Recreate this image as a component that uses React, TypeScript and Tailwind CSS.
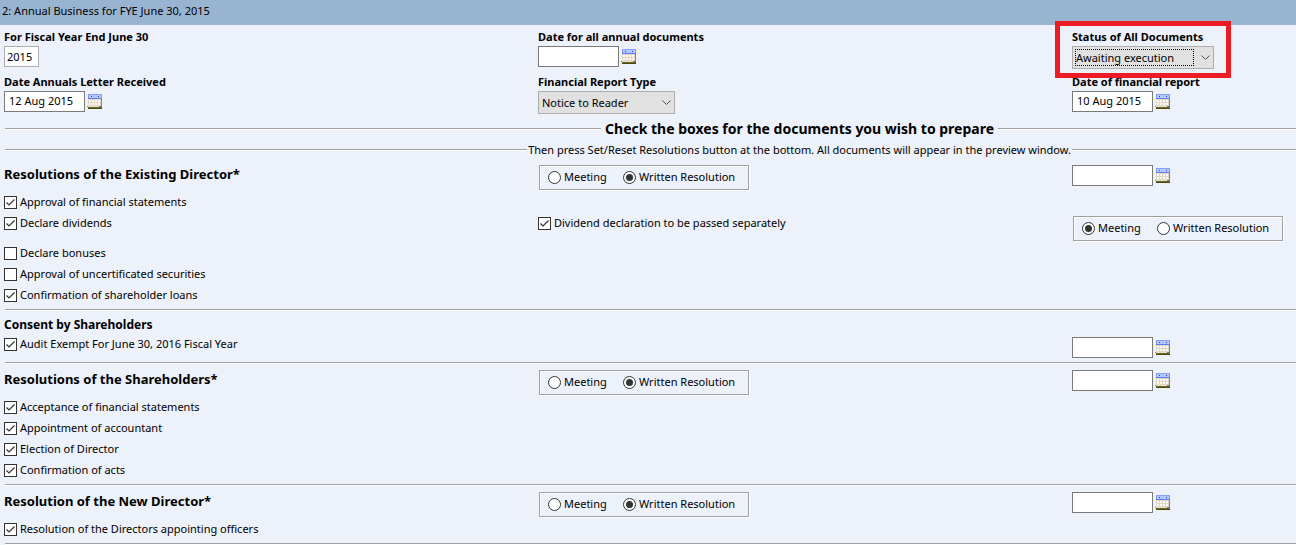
import React, { useState } from 'react';
import clsx from 'clsx';

const GRID = 'grid grid-cols-[534fr_534fr_224fr] pl-1';

function CalendarIcon() {
  return (
    <svg width="15" height="15" viewBox="0 0 15 15" shapeRendering="crispEdges" aria-hidden="true">
      <rect x="1" y="0" width="14" height="5" fill="#b4c8ff" />
      <rect x="1" y="0" width="14" height="1" fill="#86a0ff" />
      <rect x="1" y="1" width="1" height="4" fill="#7f98f5" />
      <rect x="14" y="1" width="1" height="4" fill="#7f98f5" />
      <rect x="1" y="4" width="14" height="1" fill="#5f7cf0" />
      <rect x="4" y="2" width="1" height="1" fill="#2c3fa8" />
      <rect x="11" y="2" width="1" height="1" fill="#2c3fa8" />
      <rect x="1" y="5" width="14" height="8" fill="#ded8c4" />
      {[2, 5, 8, 11].map(x =>
        [6, 9].map(y => <rect key={`${x}-${y}`} x={x} y={y} width="2" height="2" fill="#fff8f4" />)
      )}
      <rect x="2" y="12" width="11" height="1" fill="#e9dfd0" />
      <rect x="14" y="5" width="1" height="8" fill="#8a8660" />
      <rect x="0" y="12" width="1" height="1" fill="#8a8890" />
      <rect x="12" y="12" width="3" height="1" fill="#77747c" />
      <rect x="1" y="13" width="14" height="1" fill="#6b682c" />
      <rect x="1" y="14" width="14" height="1" fill="#4c4a08" />
    </svg>
  );
}

interface DateBoxProps {
  id: string;
  value?: string;
  label?: string;
}

function DateBox({ id, value = '', label }: DateBoxProps) {
  return (
    <div className="flex items-center gap-0.5">
      <input
        id={id}
        type="text"
        aria-label={label}
        defaultValue={value}
        className="h-[21px] w-[81px] border border-[#7a7a7a] bg-white px-1 pb-0.5"
      />
      <button type="button" aria-label="Pick a date">
        <CalendarIcon />
      </button>
    </div>
  );
}

interface FieldProps {
  id: string;
  label: string;
  highlighted?: boolean;
  children: React.ReactNode;
}

function Field({ id, label, highlighted, children }: FieldProps) {
  return (
    <div className="relative h-[45px]">
      <label htmlFor={id} className="block h-[18px] font-bold leading-[18px]">
        {label}
      </label>
      <div className="flex items-start">{children}</div>
      {highlighted && (
        <div className="pointer-events-none absolute -left-[17px] -top-[7px] z-10 h-[57px] w-[176px] border-[5px] border-[#ed1c24]" />
      )}
    </div>
  );
}

interface DropDownProps {
  id: string;
  options: string[];
  focused?: boolean;
  className: string;
}

function DropDown({ id, options, focused, className }: DropDownProps) {
  return (
    <div className={clsx('relative', className)}>
      <select
        id={id}
        className="h-[23px] w-full appearance-none border border-[#adadad] bg-[#e1e1e1] pl-[3px] pr-5 outline-none"
      >
        {options.map(option => (
          <option key={option}>{option}</option>
        ))}
      </select>
      {focused && (
        <span className="pointer-events-none absolute inset-y-[3px] left-[3px] right-5 border border-dotted border-black" />
      )}
      <svg
        className="pointer-events-none absolute right-1 top-2"
        width="9"
        height="7"
        viewBox="0 0 9 7"
        fill="none"
        stroke="#505050"
        aria-hidden="true"
      >
        <path d="M0.5 1.5 4.5 5.5 8.5 1.5" />
      </svg>
    </div>
  );
}

interface CheckItemProps {
  label: string;
  checked?: boolean;
}

function CheckItem({ label, checked = false }: CheckItemProps) {
  return (
    <label className="flex h-[21px] items-center gap-[3px]">
      <span className="relative h-[13px] w-[13px]">
        <input
          type="checkbox"
          defaultChecked={checked}
          className="peer block h-[13px] w-[13px] appearance-none border border-[#333333] bg-white"
        />
        <svg
          className="pointer-events-none absolute inset-0 hidden peer-checked:block"
          viewBox="0 0 13 13"
          fill="none"
          stroke="#333333"
          strokeWidth="1.2"
          aria-hidden="true"
        >
          <path d="M2.5 6.5 5 9 10.5 3.5" />
        </svg>
      </span>
      <span className="pb-0.5">{label}</span>
    </label>
  );
}

interface MethodChoiceProps {
  name: string;
  initial?: string;
}

function MethodChoice({ name, initial = 'Written Resolution' }: MethodChoiceProps) {
  const [method, setMethod] = useState(initial);

  return (
    <fieldset
      aria-label={name}
      className="ml-px flex h-[25px] w-[210px] items-center border border-[#a0a0a0] pl-2 shadow-[1px_1px_0_#fff,inset_1px_1px_0_#fff]"
    >
      {['Meeting', 'Written Resolution'].map(option => (
        <label key={option} className="flex items-center gap-[3px] first:w-[75px]">
          <input
            type="radio"
            name={name}
            checked={method === option}
            onChange={() => setMethod(option)}
            className="flex h-[13px] w-[13px] appearance-none items-center justify-center rounded-full border border-[#333333] bg-white before:hidden before:h-[7px] before:w-[7px] before:rounded-full before:bg-[#333333] checked:before:block"
          />
          <span className="pb-0.5">{option}</span>
        </label>
      ))}
    </fieldset>
  );
}

function Rule({ className }: { className?: string }) {
  return <div className={clsx('h-0.5 border-t border-[#a0a0a0] bg-white', className)} />;
}

function CenteredRule({ children, className }: { children: React.ReactNode; className: string }) {
  return (
    <div className={clsx('flex w-[123%] items-center pl-[5px]', className)}>
      <Rule className="flex-1" />
      {children}
      <Rule className="flex-1" />
    </div>
  );
}

interface SectionHeadProps {
  title: string;
  name: string;
}

function SectionHead({ title, name }: SectionHeadProps) {
  return (
    <div className={clsx(GRID, 'h-[27px] items-start')}>
      <h2 className="text-[13px] font-bold leading-[19px]">{title}</h2>
      <MethodChoice name={`${name}-method`} />
      <DateBox id={`${name}-date`} label={`${title} date`} />
    </div>
  );
}

export default function App() {
  return (
    <div className="min-h-screen overflow-x-hidden bg-[#ecf1fa] font-['Noto_Sans','Open_Sans',sans-serif] text-[11px] leading-4 text-black">
      <header className="flex h-[25px] items-center bg-[#99b4d1] pb-1 pl-0.5">
        <h1>2: Annual Business for FYE June 30, 2015</h1>
      </header>

      <form>
        <div className={clsx(GRID, 'pt-[3px]')}>
          <Field id="fiscal-year" label="For Fiscal Year End June 30">
            <input
              id="fiscal-year"
              type="text"
              defaultValue="2015"
              className="h-[21px] w-[35px] border border-[#abadb3] bg-white px-0.5"
            />
          </Field>
          <Field id="annual-date" label="Date for all annual documents">
            <DateBox id="annual-date" />
          </Field>
          <Field id="status" label="Status of All Documents" highlighted>
            <DropDown id="status" options={['Awaiting execution', 'Executed']} focused className="w-[142px]" />
          </Field>
          <Field id="letter-date" label="Date Annuals Letter Received">
            <DateBox id="letter-date" value="12 Aug 2015" />
          </Field>
          <Field id="report-type" label="Financial Report Type">
            <DropDown id="report-type" options={['Notice to Reader', 'Audited']} className="w-[137px]" />
          </Field>
          <Field id="report-date" label="Date of financial report">
            <DateBox id="report-date" value="10 Aug 2015" />
          </Field>
        </div>

        <CenteredRule className="h-[22px] gap-1">
          <h2 className="text-sm font-bold">Check the boxes for the documents you wish to prepare</h2>
        </CenteredRule>
        <CenteredRule className="h-5 gap-px">
          <p>Then press Set/Reset Resolutions button at the bottom. All documents will appear in the preview window.</p>
        </CenteredRule>

        {/* Existing director */}
        <section className="pb-[3px] pt-[5px]">
          <SectionHead title="Resolutions of the Existing Director*" name="existing-director" />
          <div className="pl-1">
            <CheckItem label="Approval of financial statements" checked />
          </div>
          <div className={clsx(GRID, 'h-[30px] items-start')}>
            <CheckItem label="Declare dividends" checked />
            <CheckItem label="Dividend declaration to be passed separately" checked />
            <div className="pt-[3px]">
              <MethodChoice name="dividend-method" initial="Meeting" />
            </div>
          </div>
          <div className="pl-1">
            <CheckItem label="Declare bonuses" />
            <CheckItem label="Approval of uncertificated securities" />
            <CheckItem label="Confirmation of shareholder loans" checked />
          </div>
        </section>
        <Rule className="ml-[5px]" />

        {/* Consent */}
        <section className={clsx(GRID, 'items-end pb-1 pt-[5px]')}>
          <div className="pb-[3px]">
            <h2 className="text-xs font-bold leading-[18px]">Consent by Shareholders</h2>
            <CheckItem label="Audit Exempt For June 30, 2016 Fiscal Year" checked />
          </div>
          <div className="col-start-3">
            <DateBox id="consent-date" label="Consent date" />
          </div>
        </section>
        <Rule className="ml-[5px]" />

        {/* Shareholders */}
        <section className="pb-[3px] pt-1.5">
          <SectionHead title="Resolutions of the Shareholders*" name="shareholders" />
          <div className="pl-1">
            <CheckItem label="Acceptance of financial statements" checked />
            <CheckItem label="Appointment of accountant" checked />
            <CheckItem label="Election of Director" checked />
            <CheckItem label="Confirmation of acts" checked />
          </div>
        </section>
        <Rule className="ml-[5px]" />

        {/* New director */}
        <section className="pb-[3px] pt-1.5">
          <SectionHead title="Resolution of the New Director*" name="new-director" />
          <div className="pl-1">
            <CheckItem label="Resolution of the Directors appointing officers" checked />
          </div>
        </section>
        <Rule className="ml-[5px]" />
      </form>
    </div>
  );
}
